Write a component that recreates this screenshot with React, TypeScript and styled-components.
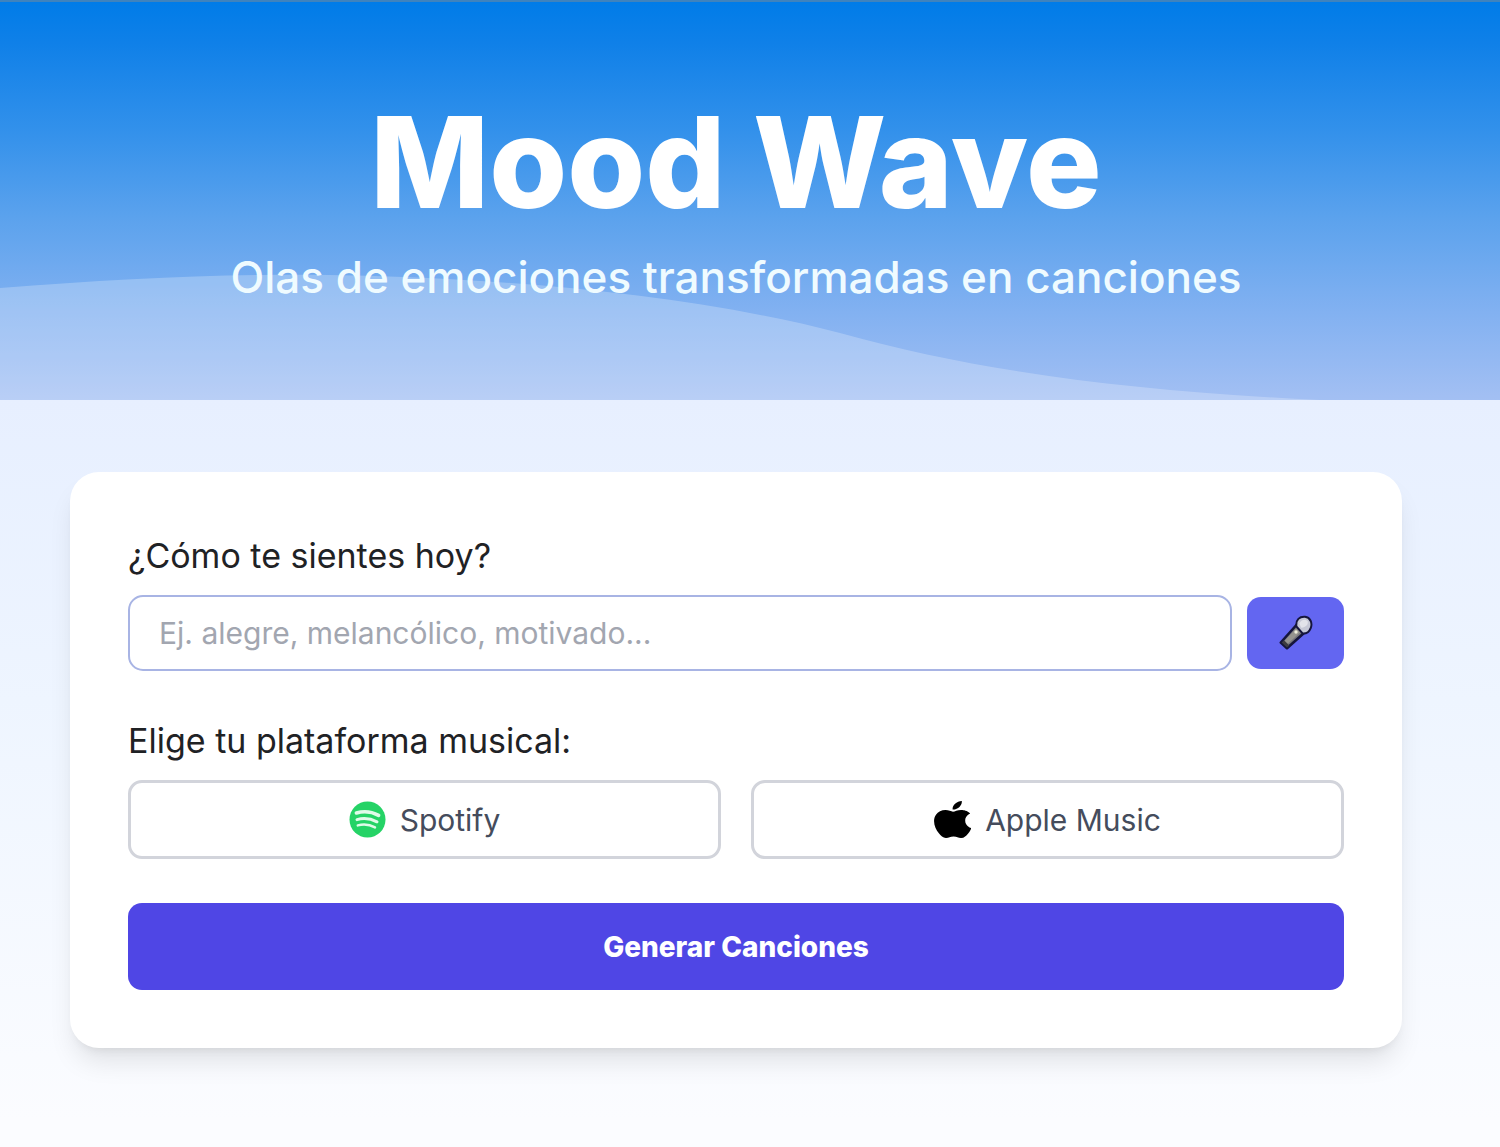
import React, { useState } from "react";
import styled, { createGlobalStyle } from "styled-components";

const GlobalStyle = createGlobalStyle`
  *, *::before, *::after { box-sizing: border-box; }
  html { min-height: 100%; }
  body {
    margin: 0;
    font-family: Inter, "Noto Sans", "Liberation Sans", sans-serif;
    color: #1f2225;
    background: #fbfcff;
  }
  button, input { font-family: inherit; }
`;

const Page = styled.div`
  min-height: 100vh;
  display: flex;
  flex-direction: column;
  background: linear-gradient(180deg, #dfe9fe 0, #e7efff 400px, #eef5ff 700px, #fbfcff 1120px);
`;

const Header = styled.header`
  position: relative;
  min-height: 400px;
  padding: 88px 28px 90px 0;
  border-top: 2px solid #3f83bd;
  text-align: center;
  background: linear-gradient(180deg, #007ce8 0, #0f80e8 40px, #3391eb 130px, #5ba2ed 215px, #82b1f1 310px, #a4c0f3 400px);
`;

const Wave = styled.svg`
  position: absolute;
  left: 0;
  bottom: 0;
  width: 100%;
  height: 128px;
`;

const Title = styled.h1`
  position: relative;
  margin: 0;
  font-size: 126px;
  line-height: 144px;
  font-weight: 800;
  color: #ffffff;
`;

const Subtitle = styled.p`
  position: relative;
  margin: 15px 0 0;
  font-size: 44px;
  line-height: 56px;
  font-weight: 500;
  color: #effbff;
`;

const Main = styled.main`
  flex: 1;
  padding: 72px 98px 98px 70px;
`;

const Card = styled.form`
  display: flex;
  flex-direction: column;
  gap: 44px;
  padding: 58px;
  border-radius: 29px;
  background: #ffffff;
  box-shadow: 0 18px 27px -5px rgba(0, 0, 0, 0.1), 0 7px 11px -7px rgba(0, 0, 0, 0.1);
`;

const Field = styled.div`
  display: flex;
  flex-direction: column;
  gap: 14px;
`;

const Label = styled.label`
  font-size: 34px;
  line-height: 51px;
`;

const Group = styled.fieldset`
  min-width: 0;
  margin: 0;
  padding: 0;
  border: 0;
`;

const Legend = styled.legend`
  margin-bottom: 14px;
  padding: 0;
  font-size: 34px;
  line-height: 51px;
`;

const InputRow = styled.div`
  display: flex;
  align-items: center;
  gap: 15px;
`;

const MoodInput = styled.input`
  flex: 1;
  min-width: 0;
  height: 76px;
  padding: 0 29px;
  border: 2px solid #a8b4e4;
  border-radius: 15px;
  outline: none;
  background: #ffffff;
  color: #1f2225;
  font-size: 30px;
  &::placeholder { color: #a2a6b0; opacity: 1; }
`;

const MicButton = styled.button`
  display: flex;
  align-items: center;
  justify-content: center;
  width: 97px;
  height: 72px;
  padding: 0;
  border: 0;
  border-radius: 14px;
  background: #6366f1;
  cursor: pointer;
`;

const Platforms = styled.div`
  display: grid;
  grid-template-columns: 1fr 1fr;
  gap: 30px;
`;

const PlatformButton = styled.button<{ $selected: boolean }>`
  display: flex;
  align-items: center;
  justify-content: center;
  gap: 14px;
  height: 79px;
  padding: 0;
  border: 3px solid ${(p) => (p.$selected ? "#6366f1" : "#d2d4db")};
  border-radius: 14px;
  background: #ffffff;
  color: #454c5c;
  font-size: 30px;
  cursor: pointer;
`;

const SubmitButton = styled.button`
  height: 87px;
  border: 0;
  border-radius: 14px;
  background: #4f46e5;
  color: #ffffff;
  font-size: 28px;
  font-weight: 800;
  cursor: pointer;
`;

const MicIcon = () => (
  <svg width="34" height="36" viewBox="0 0 34 36" aria-hidden="true">
    <path
      d="M17.4 10 L1.8 27.5 L8 33.2 L25 18 Z"
      fill="#77767c"
      stroke="#15153c"
      strokeWidth="2.6"
      strokeLinejoin="round"
    />
    <path d="M17 13.4 L5 26.6 L8 29.4 L21.4 17.2 Z" fill="#96948f" />
    <path d="M2.6 27.6 L5 25.2 L10.4 30.6 L8 32.6 Z" fill="#3c3b40" />
    <path
      d="M17.4 11.4 C16.6 4.6 20.6 1.4 26 1.8 C31.4 2.4 33.6 8 31.8 12.8 C30.2 17 27 18.8 23.8 18.6 Z"
      fill="#c6c8d6"
      stroke="#15153c"
      strokeWidth="2"
      strokeLinejoin="round"
    />
    <path d="M20.4 8.6 C21.8 4.6 27 3.6 28.8 6.6 C29.4 10.4 25.6 13 22 12.6 Z" fill="#e2e3ea" />
    <circle cx="17" cy="17" r="1.7" fill="#f0efdc" />
  </svg>
);

const SpotifyIcon = () => (
  <svg width="37" height="37" viewBox="0 0 37 37" aria-hidden="true">
    <circle cx="18.5" cy="18.5" r="18" fill="#25d366" />
    <g fill="none" stroke="#e0fbe9" strokeLinecap="round">
      <path d="M7.4 12 C14.4 10 23 10.8 29.6 14.4" strokeWidth="3.6" />
      <path d="M8 18.6 C14.6 16.8 21.8 17.6 28 20.8" strokeWidth="3" />
      <path d="M8.8 24.4 C14.6 23 20.8 23.6 26 26.4" strokeWidth="2.5" />
    </g>
  </svg>
);

const AppleIcon = () => (
  <svg width="37" height="37" viewBox="2.2 0 19.4 24" preserveAspectRatio="none" aria-hidden="true">
    <path
      fill="#000000"
      d="M12.152 6.896c-.948 0-2.415-1.078-3.96-1.04-2.04.027-3.91 1.183-4.961 3.014-2.117 3.675-.546 9.103 1.519 12.09 1.013 1.454 2.208 3.09 3.792 3.039 1.52-.065 2.09-.987 3.935-.987 1.831 0 2.35.987 3.96.948 1.637-.026 2.676-1.48 3.676-2.948 1.156-1.688 1.636-3.325 1.662-3.415-.039-.013-3.182-1.221-3.22-4.857-.026-3.04 2.48-4.494 2.597-4.559-1.429-2.09-3.623-2.324-4.39-2.376-2-.156-3.675 1.09-4.61 1.09zM15.53 3.83c.843-1.012 1.4-2.427 1.245-3.83-1.207.052-2.662.805-3.532 1.818-.78.896-1.454 2.338-1.273 3.714 1.338.104 2.715-.688 3.559-1.701"
    />
  </svg>
);

const platforms = [
  { id: "spotify", name: "Spotify", Icon: SpotifyIcon },
  { id: "apple", name: "Apple Music", Icon: AppleIcon },
];

export default function App() {
  const [mood, setMood] = useState("");
  const [platform, setPlatform] = useState<string | null>(null);

  return (
    <>
      <GlobalStyle />
      <Page>
        <Header>
          <Wave viewBox="0 0 1500 128" preserveAspectRatio="none" aria-hidden="true">
            <path
              d="M0 16 C90 9 180 4 260 3 C420 1 660 14 840 61 C980 100 1130 119 1320 128 L0 128 Z"
              fill="#ffffff"
              fillOpacity="0.24"
            />
          </Wave>
          <Title>Mood Wave</Title>
          <Subtitle>Olas de emociones transformadas en canciones</Subtitle>
        </Header>
        <Main>
          <Card onSubmit={(e) => e.preventDefault()}>
            <Field>
              <Label htmlFor="mood">¿Cómo te sientes hoy?</Label>
              <InputRow>
                <MoodInput
                  id="mood"
                  type="text"
                  placeholder="Ej. alegre, melancólico, motivado..."
                  value={mood}
                  onChange={(e) => setMood(e.target.value)}
                />
                <MicButton type="button" aria-label="Micrófono">
                  <MicIcon />
                </MicButton>
              </InputRow>
            </Field>
            <Group>
              <Legend>Elige tu plataforma musical:</Legend>
              <Platforms>
                {platforms.map(({ id, name, Icon }) => (
                  <PlatformButton
                    key={id}
                    type="button"
                    $selected={platform === id}
                    aria-pressed={platform === id}
                    onClick={() => setPlatform(id)}
                  >
                    <Icon />
                    {name}
                  </PlatformButton>
                ))}
              </Platforms>
            </Group>
            <SubmitButton type="submit">Generar Canciones</SubmitButton>
          </Card>
        </Main>
      </Page>
    </>
  );
}
